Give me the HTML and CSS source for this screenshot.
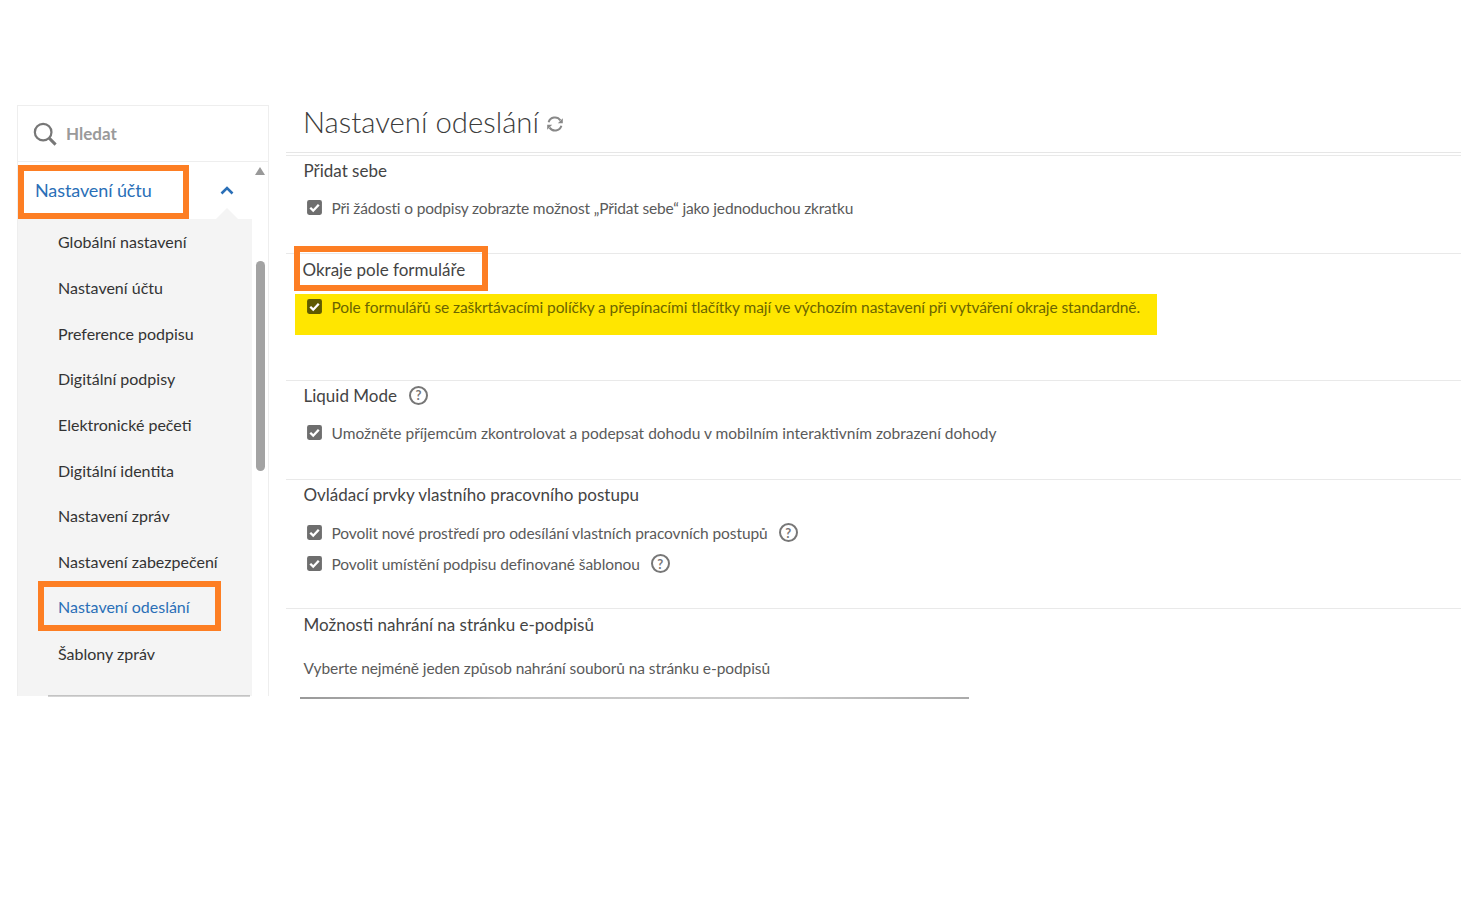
FILE: index.html
```html
<!DOCTYPE html>
<html lang="cs">
<head>
  <meta charset="UTF-8">
  <title>Nastavení odeslání</title>
  <link rel="stylesheet" href="styles.css">
</head>
<body>
  <svg class="defs" width="0" height="0">
    <symbol id="check" viewBox="0 0 16 16">
      <rect x="1" y="1" width="14" height="14" rx="2" fill="currentColor"/>
      <path d="M4 8.2l2.8 2.8L12 5.4" fill="none" stroke="#fff" stroke-width="2.2"/>
    </symbol>
  </svg>

  <div class="page">
    <!-- Levý panel -->
    <aside class="sidebar">
      <div class="search">
        <svg class="search-icon" viewBox="0 0 26 26">
          <circle cx="11" cy="11" r="9" fill="none" stroke="#777" stroke-width="2.4"/>
          <path d="M17.5 17.5l7 7" stroke="#777" stroke-width="3.2"/>
        </svg>
        <span>Hledat</span>
      </div>
      <div class="nav-wrap">
        <nav class="nav">
          <div class="nav-head">
            <span class="nav-title">Nastavení účtu</span>
            <svg class="chevron" viewBox="0 0 14 9">
              <path d="M1.5 7.5L7 2l5.5 5.5" fill="none" stroke="#2a6fb7" stroke-width="2.6"/>
            </svg>
          </div>
          <ul class="nav-list">
            <li class="nav-item">Globální nastavení</li>
            <li class="nav-item">Nastavení účtu</li>
            <li class="nav-item">Preference podpisu</li>
            <li class="nav-item">Digitální podpisy</li>
            <li class="nav-item">Elektronické pečeti</li>
            <li class="nav-item">Digitální identita</li>
            <li class="nav-item">Nastavení zpráv</li>
            <li class="nav-item">Nastavení zabezpečení</li>
            <li class="nav-item"><span class="nav-current">Nastavení odeslání</span></li>
            <li class="nav-item">Šablony zpráv</li>
          </ul>
          <div class="cut-line"></div>
        </nav>
        <div class="scrollbar">
          <div class="scroll-arrow"></div>
          <div class="scroll-thumb"></div>
        </div>
      </div>
    </aside>

    <!-- Obsah -->
    <main class="content">
      <h1 class="title">Nastavení odeslání
        <svg class="sync" viewBox="0 0 18 18">
          <path d="M2.6 7.2A6.6 6.6 0 0 1 14.4 5.4" fill="none" stroke="#888" stroke-width="2"/>
          <path d="M16.8 3.2v5h-5z" fill="#888"/>
          <path d="M15.4 10.8A6.6 6.6 0 0 1 3.6 12.6" fill="none" stroke="#888" stroke-width="2"/>
          <path d="M1.2 14.8v-5h5z" fill="#888"/>
        </svg>
      </h1>

      <section class="block block-self">
        <h2 class="block-head">Přidat sebe</h2>
        <label class="row"><svg class="box"><use href="#check"/></svg>Při žádosti o podpisy zobrazte možnost „Přidat sebe“ jako jednoduchou zkratku</label>
      </section>

      <section class="block block-borders">
        <h2 class="block-head block-head-marked">Okraje pole formuláře</h2>
        <label class="row row-marked"><svg class="box"><use href="#check"/></svg>Pole formulářů se zaškrtávacími políčky a přepínacími tlačítky mají ve výchozím nastavení při vytváření okraje standardně.</label>
      </section>

      <section class="block block-liquid">
        <h2 class="block-head">Liquid Mode <span class="help">?</span></h2>
        <label class="row"><svg class="box"><use href="#check"/></svg>Umožněte příjemcům zkontrolovat a podepsat dohodu v mobilním interaktivním zobrazení dohody</label>
      </section>

      <section class="block block-flow">
        <h2 class="block-head">Ovládací prvky vlastního pracovního postupu</h2>
        <label class="row"><svg class="box"><use href="#check"/></svg>Povolit nové prostředí pro odesílání vlastních pracovních postupů <span class="help">?</span></label>
        <label class="row"><svg class="box"><use href="#check"/></svg>Povolit umístění podpisu definované šablonou <span class="help">?</span></label>
      </section>

      <section class="block block-upload">
        <h2 class="block-head">Možnosti nahrání na stránku e-podpisů</h2>
        <p class="row row-plain">Vyberte nejméně jeden způsob nahrání souborů na stránku e-podpisů</p>
        <div class="fade-line"></div>
      </section>
    </main>
  </div>
</body>
</html>
```

FILE: styles.css
```css
body {
  margin: 0;
  background: #fff;
  font-family: 'Lato', 'Noto Sans', sans-serif;
  color: #4b4b4b;
}

.defs {
  display: block;
}

.page {
  display: flex;
  align-items: flex-start;
  gap: 17px;
  padding: 105px 0 0 18px;
  height: 814px;
  box-sizing: border-box;
}

/* sidebar */
.sidebar {
  width: 251px;
  height: 591px;
  flex-shrink: 0;
  box-sizing: border-box;
  border: 1px solid #eee;
  border-bottom: 0;
  border-left: 0;
  display: flex;
  flex-direction: column;
  box-shadow: -1px 0 0 #eee;
}

.search {
  height: 55px;
  flex-shrink: 0;
  display: flex;
  align-items: center;
  gap: 9px;
  padding-left: 15px;
  border-bottom: 1px solid #eee;
  font-size: 17px;
  font-weight: 700;
  color: #9a9a9a;
}

.search-icon {
  width: 24px;
  height: 24px;
}

.nav-wrap {
  display: flex;
  flex: 1;
  min-height: 0;
}

.nav {
  width: 234px;
  display: flex;
  flex-direction: column;
  background: #f4f4f4;
  position: relative;
}

.nav-head {
  height: 57px;
  flex-shrink: 0;
  background: #fff;
  display: flex;
  align-items: center;
  justify-content: space-between;
  padding-right: 18px;
  position: relative;
}

.nav-head::after {
  content: "";
  position: absolute;
  left: 198px;
  bottom: 0;
  border: 11px solid transparent;
  border-top: 0;
  border-bottom-color: #f4f4f4;
}

.nav-title {
  width: 171px;
  height: 54px;
  box-sizing: border-box;
  border: 6px solid #fd7e23;
  padding: 0 0 4px 11px;
  display: flex;
  align-items: center;
  font-size: 18px;
  letter-spacing: -0.1px;
  color: #2a6fb7;
  margin-top: 3px;
}

.chevron {
  width: 14px;
  height: 9px;
}

.nav-list {
  list-style: none;
  margin: 0;
  padding: 0;
}

.nav-item {
  height: 45.7px;
  display: flex;
  align-items: center;
  padding-left: 40px;
  font-size: 16px;
  color: #333;
}

.nav-current {
  width: 183px;
  flex-shrink: 0;
  box-sizing: border-box;
  margin: 0 0 3px -20px;
  padding: 8px 0 6px 14px;
  line-height: 24px;
  border: 6px solid #fd7e23;
  color: #2a6fb7;
}

.cut-line {
  position: absolute;
  left: 30px;
  right: 2px;
  bottom: -1px;
  height: 2px;
  background: linear-gradient(#bbb, #ddd);
}

.scrollbar {
  flex: 1;
  display: flex;
  flex-direction: column;
  align-items: center;
  padding-top: 5px;
}

.scroll-arrow {
  width: 0;
  height: 0;
  border: 5.5px solid transparent;
  border-top: 0;
  border-bottom: 8px solid #999;
}

.scroll-thumb {
  width: 9px;
  height: 210px;
  margin-top: 86px;
  background: #a3a3a3;
  border-radius: 5px;
}

/* main */
.content {
  flex: 1;
  min-width: 0;
}

.title {
  margin: 0;
  height: 48px;
  box-sizing: border-box;
  padding: 0 0 14px 17px;
  display: flex;
  align-items: center;
  gap: 7px;
  font-size: 29.3px;
  font-weight: 300;
  line-height: 36px;
  color: #3c3c3c;
  border-bottom: 1px solid #e6e6e6;
}

.sync {
  width: 18px;
  height: 18px;
  margin-top: 4px;
}

.block {
  box-sizing: border-box;
  border-top: 1px solid #e9e9e9;
  padding-left: 17.5px;
}

.block-self {
  height: 98px;
  margin-top: 2px;
}

.block-borders {
  height: 127px;
}

.block-liquid {
  height: 99px;
}

.block-flow {
  height: 129px;
}

.block-upload {
  height: 95px;
}

.block-head {
  margin: 0;
  height: 28px;
  display: flex;
  align-items: center;
  gap: 12px;
  font-size: 17px;
  font-weight: 400;
  color: #444;
}

.block-head-marked {
  width: 194px;
  height: 45px;
  padding: 2px 0 0 3px;
  box-sizing: border-box;
  margin: -8px 0 3px -10px;
  border: 6px solid #fd7e23;
}

.row {
  display: flex;
  align-items: center;
  margin: 0;
  height: 31px;
  font-size: 15.5px;
  letter-spacing: -0.08px;
  color: #5a5a5a;
  white-space: nowrap;
}

.block-self .row {
  letter-spacing: -0.16px;
}

.block-liquid .row {
  letter-spacing: 0;
}

.block-head + .row {
  margin-top: 8px;
}

.block-flow .block-head + .row {
  margin-top: 9px;
}

.block-head-marked + .row {
  margin-top: 0;
}

.row-marked {
  width: 862px;
  height: 41px;
  box-sizing: border-box;
  margin-left: -9px;
  padding: 0 0 16px 9px;
  background: #ffe600;
  color: #6b6500;
}

.block-upload .block-head {
  padding-top: 1px;
}

.block-upload .row-plain {
  margin-top: 14px;
}

.box {
  width: 17px;
  height: 17px;
  margin: 0 9px 0 2px;
  flex-shrink: 0;
  color: #6e6e6e;
}

.row-marked .box {
  color: #5f5a00;
}

.help {
  width: 15px;
  height: 15px;
  margin-left: 11px;
  flex-shrink: 0;
  display: flex;
  align-items: center;
  justify-content: center;
  border: 2px solid #777;
  border-radius: 50%;
  font-size: 13px;
  font-weight: 700;
  color: #777;
}

.block-head .help {
  margin-left: 0;
}

.fade-line {
  width: 669px;
  height: 2px;
  margin: 14px 0 0 -4px;
  background: linear-gradient(90deg, #999, #c4c4c4 30%, #ccc 70%, #aaa);
}
```
